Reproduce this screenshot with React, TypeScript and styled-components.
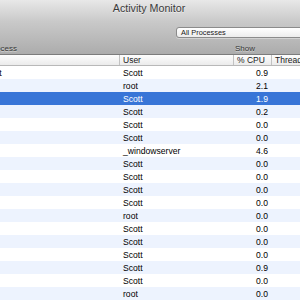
import React from 'react'
import styled, { createGlobalStyle } from 'styled-components'

const GlobalStyle = createGlobalStyle`
  html, body {
    margin: 0;
    padding: 0;
    background: #ffffff;
    overflow: hidden;
  }
  body {
    font-family: "Liberation Sans", Arial, sans-serif;
  }
`

// the window is wider than the shot: its left part and right edge fall outside
const Window = styled.div`
  width: 426px;
  margin-left: -64px;
  display: flex;
  flex-direction: column;
`

const Chrome = styled.div`
  height: 55px;
  display: flex;
  flex-direction: column;
  background: linear-gradient(#e8e8e8, #c9c9c9 40%, #acacac);
  border-bottom: 1px solid #7c7c7c;
  box-sizing: border-box;
`

const TitleBar = styled.div`
  height: 16px;
  display: flex;
  align-items: center;
  justify-content: center;
  font-size: 10.7px;
  color: #3a3a3a;
  text-shadow: 0 1px 0 rgba(255, 255, 255, 0.5);
`

const Toolbar = styled.div`
  flex: 1;
  display: flex;
  align-items: flex-start;
  padding-top: 11px;
`

const ToolItem = styled.div<{ $width: number; $left: number }>`
  width: ${({ $width }) => $width}px;
  margin-left: ${({ $left }) => $left}px;
  display: flex;
  flex-direction: column;
  align-items: center;
  gap: 5px;
`

const IconSlot = styled.div`
  height: 11px;
`

const ToolLabel = styled.div`
  font-size: 8px;
  line-height: 11px;
  color: #363636;
  text-shadow: 0 1px 0 rgba(255, 255, 255, 0.45);
  white-space: nowrap;
`

const Popup = styled.div`
  width: 100%;
  height: 11px;
  box-sizing: border-box;
  border: 1px solid #8b8b8b;
  border-radius: 3px;
  background: linear-gradient(#ffffff, #ececec);
  font-size: 7.4px;
  line-height: 9px;
  color: #1a1a1a;
  padding-left: 4px;
  box-shadow: 0 1px 0 rgba(255, 255, 255, 0.35);
`

const COLUMNS = '183px 114px 38px 50px 1fr'

const HeaderRow = styled.div`
  display: grid;
  grid-template-columns: ${COLUMNS};
  height: 11px;
  box-sizing: border-box;
  background: linear-gradient(#fdfdfd, #ebebeb);
  border-bottom: 1px solid #b8b8b8;
`

const HeaderCell = styled.div<{ $divider?: boolean }>`
  font-size: 8.5px;
  line-height: 11px;
  color: #1a1a1a;
  padding-left: ${({ $divider }) => ($divider ? '3px' : '5px')};
  border-left: ${({ $divider }) => ($divider ? '1px solid #c2c2c2' : 'none')};
  white-space: nowrap;
  overflow: hidden;
`

const Row = styled.div<{ $stripe: boolean; $selected: boolean }>`
  display: grid;
  grid-template-columns: ${COLUMNS};
  height: 13px;
  font-size: 8.6px;
  line-height: 14px;
  background: ${({ $stripe, $selected }) => ($selected ? '#3875d7' : $stripe ? '#edf3fe' : '#ffffff')};
  color: ${({ $selected }) => ($selected ? '#ffffff' : '#000000')};
`

const Cell = styled.div<{ $align?: 'left' | 'right' }>`
  text-align: ${({ $align }) => $align ?? 'left'};
  padding: 0 3px 0 ${({ $align }) => ($align === 'right' ? '0' : '4px')};
  white-space: nowrap;
  overflow: hidden;
`

const NameCell = styled(Cell)`
  padding-left: 3px;
`

const PROCESSES = [
  { name: 'UserEventAgent', user: 'Scott', cpu: '0.9', threads: 3 },
  { name: 'mds', user: 'root', cpu: '2.1', threads: 9 },
  { name: 'Finder', user: 'Scott', cpu: '1.9', threads: 7 },
  { name: 'Dock', user: 'Scott', cpu: '0.2', threads: 3 },
  { name: 'pboard', user: 'Scott', cpu: '0.0', threads: 1 },
  { name: 'Spotlight', user: 'Scott', cpu: '0.0', threads: 4 },
  { name: 'WindowServer', user: '_windowserver', cpu: '4.6', threads: 6 },
  { name: 'iTunesHelper', user: 'Scott', cpu: '0.0', threads: 3 },
  { name: 'Mail', user: 'Scott', cpu: '0.0', threads: 12 },
  { name: 'Safari', user: 'Scott', cpu: '0.0', threads: 14 },
  { name: 'AirPort', user: 'Scott', cpu: '0.0', threads: 2 },
  { name: 'launchd', user: 'root', cpu: '0.0', threads: 3 },
  { name: 'Terminal', user: 'Scott', cpu: '0.0', threads: 4 },
  { name: 'bash', user: 'Scott', cpu: '0.0', threads: 1 },
  { name: 'TextEdit', user: 'Scott', cpu: '0.0', threads: 2 },
  { name: 'iChat', user: 'Scott', cpu: '0.9', threads: 8 },
  { name: 'Preview', user: 'Scott', cpu: '0.0', threads: 3 },
  { name: 'ntpd', user: 'root', cpu: '0.0', threads: 1 },
]

const SELECTED = 2

export default function App() {
  return (
    <>
      <GlobalStyle />
      <Window>
        <Chrome>
          <TitleBar>Activity Monitor</TitleBar>
          <Toolbar>
            <ToolItem $width={60} $left={28}>
              <IconSlot />
              <ToolLabel>Quit Process</ToolLabel>
            </ToolItem>
            <ToolItem $width={138} $left={152}>
              <Popup>All Processes</Popup>
              <ToolLabel>Show</ToolLabel>
            </ToolItem>
          </Toolbar>
        </Chrome>
        <HeaderRow>
          <HeaderCell>Process Name</HeaderCell>
          <HeaderCell $divider>User</HeaderCell>
          <HeaderCell $divider>% CPU</HeaderCell>
          <HeaderCell $divider>Threads</HeaderCell>
          <HeaderCell $divider>Real Mem</HeaderCell>
        </HeaderRow>
        {PROCESSES.map((p, i) => (
          <Row key={i} $stripe={i % 2 === 1} $selected={i === SELECTED}>
            <NameCell>{p.name}</NameCell>
            <Cell>{p.user}</Cell>
            <Cell $align="right">{p.cpu}</Cell>
            <Cell $align="right">{p.threads}</Cell>
            <Cell />
          </Row>
        ))}
      </Window>
    </>
  )
}
